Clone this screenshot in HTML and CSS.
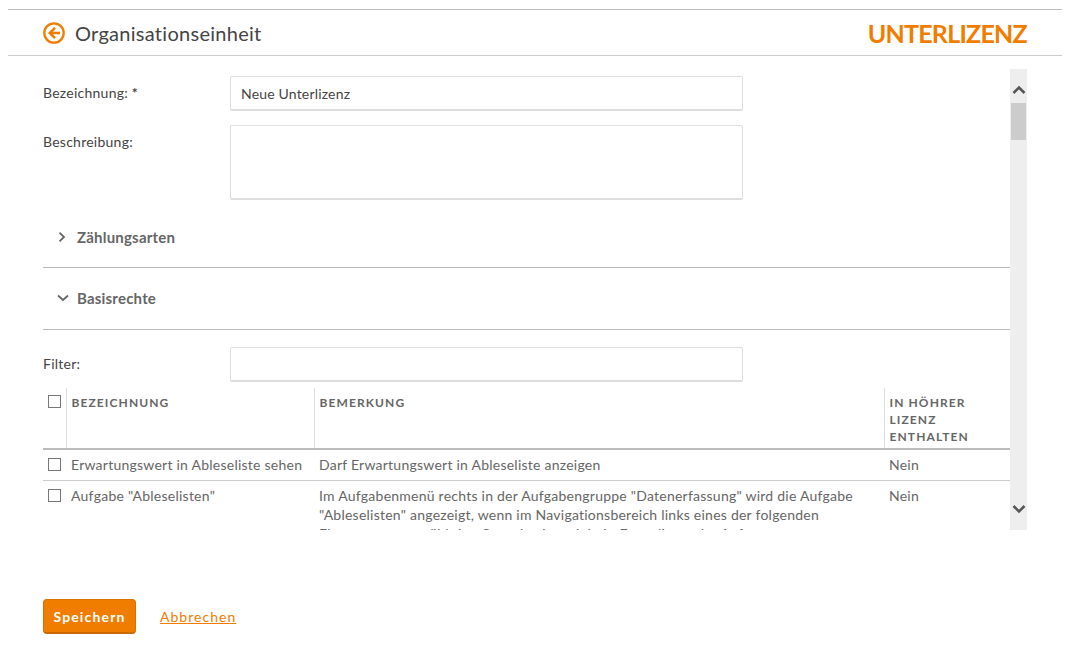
FILE: index.html
```html
<!DOCTYPE html>
<html lang="de">
<head>
<meta charset="utf-8">
<title>Organisationseinheit</title>
<link rel="stylesheet" href="styles.css">
</head>
<body>
<header class="head">
  <a class="back" href="#" aria-label="Zurück">
    <svg viewBox="0 0 22 22" width="22" height="22"><circle cx="11" cy="11" r="9.700" fill="none" stroke="#f07d00" stroke-width="2.300"/><path d="M17 11H7M12 5.800 6.800 11l5.200 5.200" fill="none" stroke="#f07d00" stroke-width="2.600"/></svg>
  </a>
  <h1 class="title">Organisationseinheit</h1>
  <div class="brand">UNTERLIZENZ</div>
</header>
<main class="scrollwrap">
  <div class="content">
    <div class="row row-name"><label class="lbl">Bezeichnung: <b class="req">*</b></label><input class="field" value="Neue Unterlizenz"></div>
    <div class="row row-desc"><label class="lbl">Beschreibung:</label><textarea class="field area"></textarea></div>
    <div class="section sec-first">
      <svg class="chev" viewBox="0 0 10 10" width="10" height="10"><path d="M2.500.700 7 5 2.500 9.300" fill="none" stroke="#666" stroke-width="1.800"/></svg>
      <span>Zählungsarten</span>
    </div>
    <div class="section sec-second">
      <svg class="chev" viewBox="0 0 12 10" width="12" height="10"><path d="M1 2.500l5 4.500 5-4.500" fill="none" stroke="#666" stroke-width="1.800"/></svg>
      <span>Basisrechte</span>
    </div>
    <div class="row row-filter"><label class="lbl">Filter:</label><input class="field"></div>
    <table class="grid">
      <colgroup><col class="c1"><col class="c2"><col class="c3"><col class="c4"></colgroup>
      <thead>
        <tr><th><span class="box"></span></th><th>BEZEICHNUNG</th><th>BEMERKUNG</th><th>IN HÖHRER LIZENZ ENTHALTEN</th></tr>
      </thead>
      <tbody>
        <tr><td><span class="box"></span></td><td>Erwartungswert in Ableseliste sehen</td><td class="note">Darf Erwartungswert in Ableseliste anzeigen</td><td>Nein</td></tr>
        <tr><td><span class="box"></span></td><td>Aufgabe "Ableselisten"</td><td class="note">Im Aufgabenmenü rechts in der Aufgabengruppe "Datenerfassung" wird die Aufgabe "Ableselisten" angezeigt, wenn im Navigationsbereich links eines der folgenden Elemente ausgewählt ist: Organisationseinheit, Ersatzliste oder Auftrag</td><td>Nein</td></tr>
      </tbody>
    </table>
  </div>
  <div class="scrollbar">
    <svg class="arrow up" viewBox="0 0 14 10" width="14" height="10"><path d="M1.500 8 7 2.500 12.500 8" fill="none" stroke="#555" stroke-width="2.500"/></svg>
    <div class="thumb"></div>
    <svg class="arrow down" viewBox="0 0 14 10" width="14" height="10"><path d="M1.500 2 7 7.500 12.500 2" fill="none" stroke="#555" stroke-width="2.500"/></svg>
  </div>
</main>
<footer class="foot">
  <button class="save">Speichern</button>
  <a class="cancel" href="#">Abbrechen</a>
</footer>
</body>
</html>
```
FILE: styles.css
```css
* { box-sizing: border-box; }
html, body { height: 100%; }
body {
  margin: 0;
  padding: 9px 5px 0 8px;
  background: #fff;
  color: #444;
  font-family: Lato, "Noto Sans", sans-serif;
  font-size: 14px;
  overflow: hidden;
}
.head {
  height: 47px;
  display: flex;
  align-items: center;
  padding: 0 35px;
  border-top: 1px solid #bbb;
  border-bottom: 1px solid #ccc;
}
.back { display: flex; margin-right: 10px; }
.title {
  margin: 0;
  font-size: 20px;
  font-weight: 400;
  letter-spacing: .28px;
  color: #444;
}
.brand {
  margin-left: auto;
  font-size: 25px;
  font-weight: 700;
  letter-spacing: -.75px;
  color: #f07d00;
}
.scrollwrap {
  margin: 13px 35px 0;
  height: 461px;
  display: flex;
}
.content {
  flex: 1;
  min-width: 0;
  overflow: hidden;
}
.row { display: flex; align-items: flex-start; }
.lbl { width: 187px; color: #444; letter-spacing: .25px; }
.req { font-weight: 700; }
.field {
  width: 513px;
  border: 1px solid #ddd;
  border-bottom: 2px solid #ddd;
  border-radius: 2px;
  background: #fff;
  padding: 0 10px;
  font: inherit;
  color: #444;
  letter-spacing: .18px;
  outline: none;
  display: block;
  resize: none;
}
.row-name { padding-top: 7px; }
.row-name .field { height: 35px; }
.row-name .lbl { padding-top: 8px; }
.row-desc { padding-top: 14px; }
.row-desc .lbl { padding-top: 8px; }
.area { height: 75px; }
.section {
  display: flex;
  align-items: center;
  height: 62px;
  padding-left: 14px;
  font-size: 15px;
  font-weight: 700;
  color: #666;
  letter-spacing: .2px;
  border-bottom: 1px solid #bbb;
}
.sec-first { margin-top: 6px; }
.sec-second { padding-bottom: 2px; }
.chev { margin-right: 8px; }
.sec-first .chev { margin-right: 10px; }
.row-filter { padding-top: 17px; }
.row-filter .field { height: 35px; }
.row-filter .lbl { padding-top: 8px; }
.grid {
  width: 100%;
  margin-top: 6px;
  border-collapse: collapse;
  table-layout: fixed;
}
.c1 { width: 23px; }
.c2 { width: 248px; }
.c3 { width: 570px; }
.grid th {
  text-align: left;
  vertical-align: top;
  padding: 6px 5px 3px;
  font-size: 12px;
  line-height: 17px;
  font-weight: 700;
  letter-spacing: 1.100px;
  color: #666;
  border-left: 1px solid #ddd;
  border-bottom: 2px solid #bbb;
}
.grid th:first-child { border-left: 0; }
.grid td {
  vertical-align: top;
  padding: 5px;
  line-height: 20px;
  color: #666;
  letter-spacing: .24px;
  border-bottom: 1px solid #ccc;
}
.grid .note { padding-right: 20px; line-height: 19px; }
.grid th:first-child { padding: 7px 0 0 5px; }
.grid td:first-child { padding: 8px 0 0 5px; }
.box {
  display: block;
  width: 13px;
  height: 13px;
  border: 1px solid #777;
  background: #fff;
}
.scrollbar {
  width: 17px;
  flex: none;
  background: #eee;
  position: relative;
}
.thumb {
  position: absolute;
  left: 1px;
  top: 34px;
  width: 15px;
  height: 37px;
  background: #ccc;
}
.arrow { position: absolute; left: 2px; }
.up { top: 16px; }
.down { bottom: 16px; }
.foot {
  margin-top: 69px;
  padding-left: 35px;
  display: flex;
  align-items: center;
}
.save {
  width: 93px;
  height: 35px;
  border: 1px solid #d97000;
  border-bottom: 2px solid #cc6a00;
  border-radius: 4px;
  background: #f07d00;
  color: #fff;
  font: 700 14px Lato, "Noto Sans", sans-serif;
  letter-spacing: 1.150px;
}
.cancel {
  margin-left: 24px;
  color: #f07d00;
  letter-spacing: 1.030px;
}
```
